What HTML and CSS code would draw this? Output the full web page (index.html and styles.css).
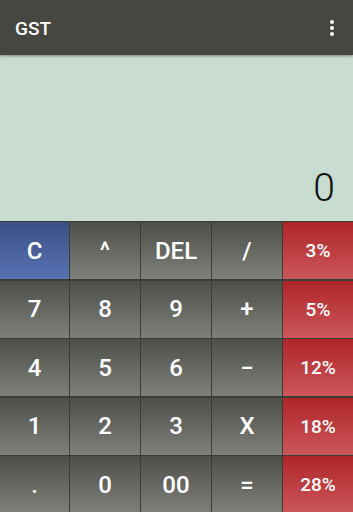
FILE: index.html
```html
<!DOCTYPE html>
<html lang="en">

<head>
    <meta charset="UTF-8">
    <meta name="viewport" content="width=device-width, initial-scale=1.0">
    <title>GST</title>
    <link rel="stylesheet" href="styles.css">
</head>

<body>

    <div class="toolbar">
        <span class="title">GST</span>
        <svg class="menu" width="4" height="16" viewBox="0 0 4 16">
            <circle cx="2" cy="2" r="2" fill="#fff"/>
            <circle cx="2" cy="8" r="2" fill="#fff"/>
            <circle cx="2" cy="14" r="2" fill="#fff"/>
        </svg>
    </div>

    <div class="display">
        <span id="result">0</span>
    </div>

    <div class="keys">
        <button class="key clear">C</button>
        <button class="key">^</button>
        <button class="key">DEL</button>
        <button class="key">/</button>
        <button class="key gst">3%</button>

        <button class="key">7</button>
        <button class="key">8</button>
        <button class="key">9</button>
        <button class="key">+</button>
        <button class="key gst">5%</button>

        <button class="key">4</button>
        <button class="key">5</button>
        <button class="key">6</button>
        <button class="key">&minus;</button>
        <button class="key gst">12%</button>

        <button class="key">1</button>
        <button class="key">2</button>
        <button class="key">3</button>
        <button class="key">X</button>
        <button class="key gst">18%</button>

        <button class="key">.</button>
        <button class="key">0</button>
        <button class="key">00</button>
        <button class="key">=</button>
        <button class="key gst">28%</button>
    </div>

</body>

</html>
```

FILE: styles.css
```css
:root {
    --bar: #454740;
    --screen: #c8dcd2;
    --line: #3a3c37;
}

* {
    margin: 0px;
    padding: 0px;
    box-sizing: border-box;
}

body {
    width: 353px;
    height: 512px;
    overflow: hidden;
    font-family: Roboto, "Liberation Sans", sans-serif;
    background-color: var(--line);
}

.toolbar {
    height: 55px;
    background-color: var(--bar);
    display: flex;
    align-items: center;
    justify-content: space-between;
    padding: 0px 19px 0px 15px;
    box-shadow: 0px 1px 3px rgba(0, 0, 0, 0.4);
    position: relative;
    z-index: 1;
}

.title {
    color: #fff;
    font-size: 19px;
    font-weight: 500;
    margin-top: 2px;
}

.display {
    height: 166px;
    background-color: var(--screen);
    display: flex;
    align-items: flex-end;
    justify-content: flex-end;
    padding: 0px 18px 10px 0px;
}

#result {
    font-size: 39px;
    font-weight: 300;
    color: #111;
}

.keys {
    display: grid;
    grid-template-columns: 69px 70px 70px 70px 70px;
    grid-auto-rows: 57px;
    row-gap: 1.5px;
    column-gap: 1px;
    padding-top: 1px;
    background-color: var(--line);
}

.key {
    border: none;
    color: #fff;
    font-family: Roboto, "Liberation Sans", sans-serif;
    font-size: 24px;
    font-weight: 500;
    background: linear-gradient(#4d4f49, #7e8079);
}

.clear {
    background: linear-gradient(#3a4f85, #5872b3);
}

.gst {
    font-size: 19px;
    background: linear-gradient(#ae2529, #cc575a);
}
```
